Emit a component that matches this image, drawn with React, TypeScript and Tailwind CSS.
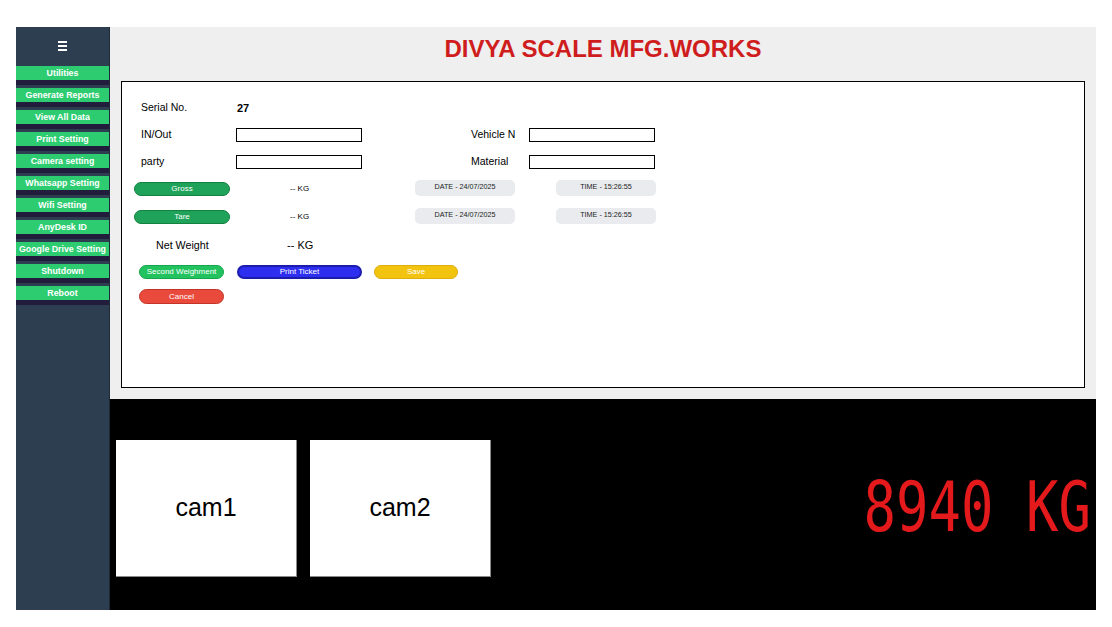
import React from 'react';

const menuItems = [
  'Utilities',
  'Generate Reports',
  'View All Data',
  'Print Setting',
  'Camera setting',
  'Whatsapp Setting',
  'Wifi Setting',
  'AnyDesk ID',
  'Google Drive Setting',
  'Shutdown',
  'Reboot',
];

const Sidebar = () => (
  <aside className="flex w-[94px] shrink-0 flex-col border-r border-[#1e2a38] bg-[#2c3e50]">
    {/* hamburger */}
    <div className="flex h-[37px] items-center justify-center">
      <div className="flex flex-col gap-[2px]">
        <span className="block h-[2px] w-[9px] bg-white" />
        <span className="block h-[2px] w-[9px] bg-white" />
        <span className="block h-[2px] w-[9px] bg-white" />
      </div>
    </div>
    <nav className="flex flex-col pt-[2px]">
      {menuItems.map((item) => (
        <div
          key={item}
          className="mb-[3px] flex h-[19px] items-start justify-center border-b-[5px] border-[#221d3c] bg-[#2ecc71] pt-[1px] text-[8.8px] font-bold leading-[12px] text-white whitespace-nowrap"
        >
          {item}
        </div>
      ))}
    </nav>
  </aside>
);

const Pill = ({ children }: { children: React.ReactNode }) => (
  <div className="flex h-[16px] w-[100px] items-center justify-center rounded-[5px] bg-[#e9ebee] text-[7.2px] text-[#222]">
    {children}
  </div>
);

const Btn = ({ label, cls }: { label: string; cls: string }) => (
  <button className={`flex h-full items-center justify-center rounded-full text-[8px] leading-none text-white ${cls}`}>
    {label}
  </button>
);

const Form = () => (
  <div className="mx-[11px] h-[307px] border border-black bg-white pt-[19px] text-black">
    <div className="flex h-[14px] items-center pl-[19px] text-[10.5px]">
      <span className="w-[96px]">Serial No.</span>
      <span className="text-[11px] font-bold">27</span>
    </div>

    <div className="mt-[13px] flex h-[14px] items-center pl-[19px] text-[10.5px]">
      <span className="w-[95px]">IN/Out</span>
      <div className="h-[14px] w-[126px] border border-black" />
      <span className="ml-[109px] w-[58px]">Vehicle N</span>
      <div className="h-[14px] w-[126px] border border-black" />
    </div>

    <div className="mt-[13px] flex h-[14px] items-center pl-[19px] text-[10.5px]">
      <span className="w-[95px]">party</span>
      <div className="h-[14px] w-[126px] border border-black" />
      <span className="ml-[109px] w-[58px]">Material</span>
      <div className="h-[14px] w-[126px] border border-black" />
    </div>

    {['Gross', 'Tare'].map((name, i) => (
      <div key={name} className={`${i === 0 ? 'mt-[13px]' : 'mt-[14px]'} flex h-[14px] items-center pl-[12px]`}>
        <div className="h-[14px] w-[96px]">
          <Btn label={name} cls="w-full border border-[#14823f] bg-[#1fa35a]" />
        </div>
        <span className="ml-[60px] w-[125px] text-[8px]">-- KG</span>
        <div className="-mt-[3px]">
          <Pill>DATE - 24/07/2025</Pill>
        </div>
        <div className="-mt-[3px] ml-[41px]">
          <Pill>TIME - 15:26:55</Pill>
        </div>
      </div>
    ))}

    <div className="mt-[14px] flex h-[14px] items-center pl-[34px] text-[10.7px]">
      <span className="w-[131px]">Net Weight</span>
      <span className="text-[11px]">-- KG</span>
    </div>

    <div className="mt-[13px] flex h-[14px] items-stretch pl-[17px]">
      <div className="w-[85px]">
        <Btn label="Second Weighment" cls="w-full border border-[#17a64f] bg-[#22c35f]" />
      </div>
      <div className="ml-[13px] w-[125px]">
        <Btn label="Print Ticket" cls="w-full border-2 border-[#1c1cae] bg-[#2e2ef0]" />
      </div>
      <div className="ml-[12px] w-[84px]">
        <Btn label="Save" cls="w-full border border-[#dcae0b] bg-[#f2c30f]" />
      </div>
    </div>

    <div className="mt-[10px] flex h-[15px] items-stretch pl-[17px]">
      <div className="w-[85px]">
        <Btn label="Cancel" cls="w-full border border-[#c23427] bg-[#ea4a3c]" />
      </div>
    </div>
  </div>
);

const Camera = ({ name }: { name: string }) => (
  <div className="flex h-[137px] w-[181px] items-center justify-center border-r border-b border-[#8a8a8a] bg-white text-[25px] text-black">
    {name}
  </div>
);

export default function App() {
  return (
    <div className="h-screen bg-white px-4 pt-[27px] font-['Liberation_Sans',Arial,sans-serif]">
      <div className="flex h-[583px] w-[1080px]">
        <Sidebar />
        <main className="flex flex-1 flex-col">
          <section className="h-[372px] bg-[#efefef]">
            <div className="flex h-[54px] justify-center pt-[10px]">
              <h1 className="text-[24px] font-bold leading-none text-[#cf1d1d]">DIVYA SCALE MFG.WORKS</h1>
            </div>
            <Form />
          </section>
          <section className="flex flex-1 items-start bg-black pl-[6px] pr-[5px] pt-[41px]">
            <div className="flex gap-[13px]">
              <Camera name="cam1" />
              <Camera name="cam2" />
            </div>
            <div className="ml-auto mt-[41px] h-[54px] origin-center scale-y-[1.27] font-['DejaVu_Sans_Mono',monospace] text-[54px] leading-none whitespace-pre text-[#e3191b]">
              8940 KG
            </div>
          </section>
        </main>
      </div>
    </div>
  );
}
